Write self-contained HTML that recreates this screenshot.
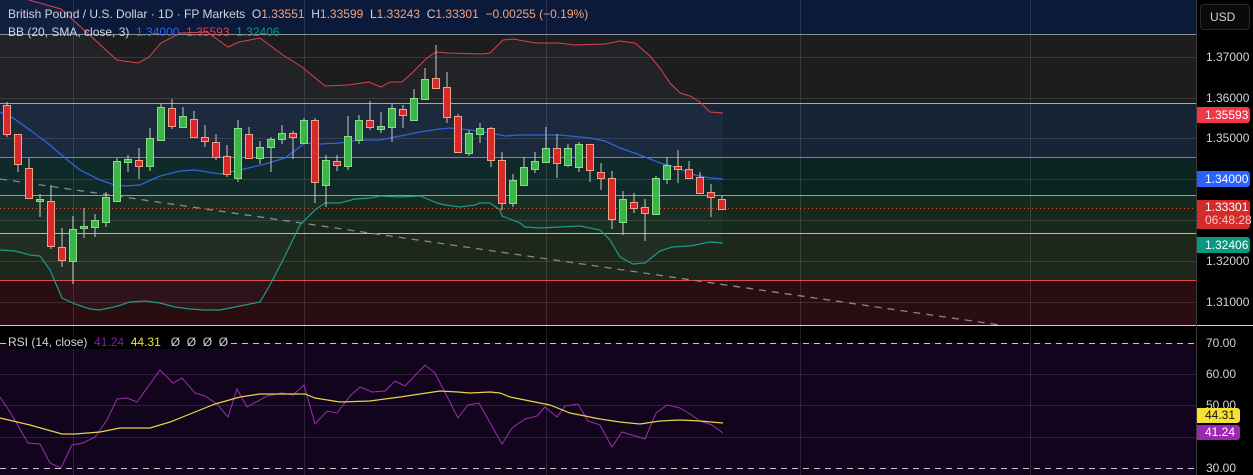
<!DOCTYPE html>
<html><head><meta charset="utf-8"><style>
*{margin:0;padding:0;box-sizing:border-box}
body{width:1253px;height:475px;background:#000;overflow:hidden;position:relative;font-family:"Liberation Sans",sans-serif}
.l{position:absolute;font-size:12px;color:#d1d4dc;white-space:nowrap}
.ax{position:absolute;left:1206px;font-size:12px;color:#d1d4dc;line-height:14px}
.tag{position:absolute;left:1197px;width:53px;padding-left:8px;font-size:12px;color:#fff;line-height:16px;border-radius:0 3px 3px 0}
</style></head><body>
<svg width="1197" height="475" style="position:absolute;left:0;top:0">
<rect x="0" y="0" width="1197" height="34" fill="#0b1a3a"/>
<rect x="0" y="34" width="1197" height="69" fill="#1d1d1f"/>
<rect x="0" y="103" width="1197" height="54" fill="#162435"/>
<rect x="0" y="157" width="1197" height="38" fill="#0a2422"/>
<rect x="0" y="195" width="1197" height="38" fill="#16291c"/>
<rect x="0" y="233" width="1197" height="47" fill="#1d281b"/>
<rect x="0" y="280" width="1197" height="45" fill="#2a0d11"/>
<rect x="0" y="326" width="1197" height="17" fill="#000"/>
<rect x="0" y="343" width="1197" height="132" fill="#12041c"/>
<g stroke="rgba(255,255,255,0.12)" stroke-width="1">
<path d="M0 57.5H1197M0 98.5H1197M0 138.5H1197M0 179.5H1197M0 220.5H1197M0 261.5H1197M0 302.5H1197"/>
<path d="M0 374.5H1197M0 405.5H1197M0 437.5H1197"/>
<path d="M73.5 0V475M304.5 0V475M546.5 0V475M800.5 0V475M1030.5 0V475"/>
</g>
<path d="M0 34.5H1197" stroke="#8a8f98"/>
<path d="M0 103.5H1197" stroke="#7ab6e6"/>
<path d="M0 157.5H1197" stroke="#3aa596"/>
<path d="M0 195.5H1197" stroke="#6dbb70"/>
<path d="M0 233.5H1197" stroke="#a3cf7c"/>
<path d="M0 280.5H1197" stroke="#de4a4e"/>
<path d="M0 208.5H1197" stroke="#d0503a" stroke-dasharray="1 3"/>
<path d="M0 343.5H1197M0 468.5H1197" stroke="#c8c8c8" stroke-dasharray="6 5"/>
<path d="M0 179L1000 325" stroke="#888" stroke-width="1.3" stroke-dasharray="7 6"/>
<polygon fill="rgba(140,160,200,0.05)" points="0,0 29,0 61,9 117,60 138,63 149,57 161,43 180,33 207,32 228,47 239,42 260,38 283,55 302,67 325,86 348,85 369,82 381,87 390,82 402,82 413,72 427,58 436,52 448,53 482,54 490,53 503,40 513,39 536,43 559,43 574,45 605,44 620,41 635,43 650,56 660,68 670,83 680,93 690,96 700,102 710,112 723,113 723,243 710,242 700,244 690,246 672,247 660,251 645,263 633,264 620,257 610,240 600,230 580,226 560,227 540,228 525,227 520,223 502,216 500,210 490,203 480,203 475,205 460,207 445,205 437,203 430,200 420,196 400,197 380,196 370,198 355,199 340,203 325,203 315,210 300,225 283,260 270,285 260,302 240,306 220,310 205,310 190,309 175,307 160,303 145,301 130,302 118,306 100,310 90,309 75,304 62,298 50,270 40,256 30,255 15,251 0,250"/>
<polyline fill="none" stroke="#d9434c" stroke-width="1" points="29,0 61,9 117,60 138,63 149,57 161,43 180,33 207,32 228,47 239,42 260,38 283,55 302,67 325,86 348,85 369,82 381,87 390,82 402,82 413,72 427,58 436,52 448,53 482,54 490,53 503,40 513,39 536,43 559,43 574,45 605,44 620,41 635,43 650,56 660,68 670,83 680,93 690,96 700,102 710,112 723,113"/>
<polyline fill="none" stroke="#2f63e0" stroke-width="1.3" points="0,112 13,118 30,130 50,145 65,158 80,170 100,180 115,185 125,186 140,185 160,176 180,171 195,170 220,174 240,170 265,164 285,158 305,143 320,144 340,143 360,140 380,140 400,136 420,132 440,129 450,128 470,130 490,133 505,136 520,135 560,135 590,138 605,141 620,148 640,155 660,163 675,167 695,175 710,178 723,179"/>
<polyline fill="none" stroke="#1f9a85" stroke-width="1.2" points="0,250 15,251 30,255 40,256 50,270 62,298 75,304 90,309 100,310 118,306 130,302 145,301 160,303 175,307 190,309 205,310 220,310 240,306 260,302 270,285 283,260 300,225 315,210 325,203 340,203 355,199 370,198 380,196 400,197 420,196 430,200 437,203 445,205 460,207 475,205 480,203 490,203 500,210 502,216 520,223 525,227 540,228 560,227 580,226 600,230 610,240 620,257 633,264 645,263 660,251 672,247 690,246 700,244 710,242 723,243"/>
<path fill="none" stroke="#c8c8c8" stroke-width="1" d="M7 102V137M18 134V172M29 158V198M40 194V217M51 185V249M62 228V267M73 216V284M84 208V238M95 214V237M106 192V227M117 158V201M128 155V172M139 148V179M150 128V171M161 103V140M172 99V129M183 107V127M194 111V137M205 125V147M216 134V160M227 145V177M238 120V182M249 127V159M260 141V164M271 137V172M282 125V144M293 131V159M304 118V143M315 118V203M326 155V207M337 155V171M348 116V170M359 115V144M370 101V130M381 112V133M392 103V142M403 105V128M414 89V120M425 68V99M436 45V88M447 72V123M458 114V153M469 130V156M480 123V143M491 127V167M502 152V210M513 174V207M524 157V186M535 152V173M546 127V163M557 134V178M568 144V167M579 142V172M590 144V182M601 163V190M612 171V229M623 191V235M634 193V213M645 199V241M656 176V214M667 157V184M678 150V183M689 161V178M700 172V194M711 184V217M722 196V210"/>
<g fill="#d8282b" stroke="#f3a184" stroke-width="1">
<rect x="3.5" y="105.5" width="7" height="29"/><rect x="14.5" y="134.5" width="7" height="30"/><rect x="25.5" y="168.5" width="7" height="30"/><rect x="47.5" y="201.5" width="7" height="45"/><rect x="58.5" y="247.5" width="7" height="13"/><rect x="135.5" y="160.5" width="7" height="6"/><rect x="168.5" y="108.5" width="7" height="18"/><rect x="190.5" y="119.5" width="7" height="18"/><rect x="201.5" y="137.5" width="7" height="4"/><rect x="212.5" y="142.5" width="7" height="15"/><rect x="223.5" y="156.5" width="7" height="18"/><rect x="245.5" y="134.5" width="7" height="24"/><rect x="289.5" y="133.5" width="7" height="4"/><rect x="311.5" y="120.5" width="7" height="62"/><rect x="333.5" y="161.5" width="7" height="4"/><rect x="366.5" y="120.5" width="7" height="7"/><rect x="399.5" y="109.5" width="7" height="6"/><rect x="432.5" y="78.5" width="7" height="10"/><rect x="443.5" y="87.5" width="7" height="30"/><rect x="454.5" y="116.5" width="7" height="36"/><rect x="487.5" y="128.5" width="7" height="32"/><rect x="498.5" y="160.5" width="7" height="43"/><rect x="553.5" y="148.5" width="7" height="15"/><rect x="586.5" y="144.5" width="7" height="26"/><rect x="597.5" y="172.5" width="7" height="6"/><rect x="608.5" y="178.5" width="7" height="41"/><rect x="630.5" y="202.5" width="7" height="6"/><rect x="641.5" y="207.5" width="7" height="6"/><rect x="674.5" y="166.5" width="7" height="3"/><rect x="685.5" y="169.5" width="7" height="9"/><rect x="696.5" y="177.5" width="7" height="16"/><rect x="707.5" y="192.5" width="7" height="5"/><rect x="718.5" y="199.5" width="7" height="10"/>
</g>
<g fill="#3bb44a" stroke="#86dd86" stroke-width="1">
<rect x="36.5" y="199.5" width="7" height="2"/><rect x="69.5" y="229.5" width="7" height="32"/><rect x="80.5" y="226.5" width="7" height="2"/><rect x="91.5" y="220.5" width="7" height="7"/><rect x="102.5" y="197.5" width="7" height="25"/><rect x="113.5" y="161.5" width="7" height="40"/><rect x="124.5" y="159.5" width="7" height="3"/><rect x="146.5" y="138.5" width="7" height="28"/><rect x="157.5" y="107.5" width="7" height="33"/><rect x="179.5" y="116.5" width="7" height="11"/><rect x="234.5" y="128.5" width="7" height="50"/><rect x="256.5" y="147.5" width="7" height="11"/><rect x="267.5" y="139.5" width="7" height="8"/><rect x="278.5" y="133.5" width="7" height="6"/><rect x="300.5" y="120.5" width="7" height="23"/><rect x="322.5" y="160.5" width="7" height="25"/><rect x="344.5" y="136.5" width="7" height="30"/><rect x="355.5" y="120.5" width="7" height="20"/><rect x="377.5" y="126.5" width="7" height="3"/><rect x="388.5" y="108.5" width="7" height="19"/><rect x="410.5" y="98.5" width="7" height="22"/><rect x="421.5" y="79.5" width="7" height="20"/><rect x="465.5" y="133.5" width="7" height="20"/><rect x="476.5" y="128.5" width="7" height="6"/><rect x="509.5" y="180.5" width="7" height="23"/><rect x="520.5" y="167.5" width="7" height="18"/><rect x="531.5" y="161.5" width="7" height="8"/><rect x="542.5" y="148.5" width="7" height="14"/><rect x="564.5" y="148.5" width="7" height="17"/><rect x="575.5" y="144.5" width="7" height="23"/><rect x="619.5" y="199.5" width="7" height="23"/><rect x="652.5" y="178.5" width="7" height="36"/><rect x="663.5" y="165.5" width="7" height="14"/>
</g>
<polyline fill="none" stroke="#9c2fb0" stroke-width="1" points="0,397 10,412 28,443 40,444 50,463 61,468 72,445 83,443 95,437 107,420 117,399 127,398 137,402 160,370 173,383 182,378 195,393 205,396 217,404 228,417 237,389 247,407 258,401 267,396 282,393 293,395 304,385 315,424 327,411 337,413 350,396 360,387 372,392 385,391 395,381 405,386 425,365 435,373 458,418 468,405 479,403 502,444 512,428 525,419 537,416 545,407 557,417 565,406 578,404 588,421 600,425 612,447 622,432 645,439 656,413 667,405 680,408 690,414 700,421 712,425 723,433"/>
<polyline fill="none" stroke="#e8d44a" stroke-width="1.2" points="0,418 30,425 62,434 75,434 100,432 120,428 150,428 170,422 200,410 215,404 240,397 260,394 305,394 315,398 340,402 370,401 400,397 440,391 458,392 470,393 490,392 500,393 510,397 530,401 550,405 570,413 600,419 620,422 640,424 660,421 680,420 700,421 723,423"/>
</svg>
<div style="position:absolute;left:0;top:325px;width:1253px;height:1px;background:#d0d0d0"></div>
<div style="position:absolute;left:1196px;top:0;width:1px;height:475px;background:#3a3a3a"></div>
<div class="l" style="left:8px;top:7px">British Pound / U.S. Dollar · 1D · FP Markets&nbsp; O<span style="color:#f5a27a">1.33551</span>&nbsp; H<span style="color:#f5a27a">1.33599</span>&nbsp; L<span style="color:#f5a27a">1.33243</span>&nbsp; C<span style="color:#f5a27a">1.33301</span>&nbsp; <span style="color:#f5a27a">−0.00255 (−0.19%)</span></div>
<div class="l" style="left:8px;top:25px">BB (20, SMA, close, 3)&nbsp; <span style="color:#2962ff">1.34000</span>&nbsp; <span style="color:#f23645">1.35593</span>&nbsp; <span style="color:#089981">1.32406</span></div>
<div class="l" style="left:8px;top:335px;background:#000">RSI (14, close)&nbsp; <span style="color:#7b1fa2">41.24</span>&nbsp; <span style="color:#f5e033">44.31</span>&nbsp;&nbsp; Ø&nbsp; Ø&nbsp; Ø&nbsp; Ø</div>
<div style="position:absolute;left:1200px;top:4px;width:50px;height:26px;border:1px solid #2a2a2a;border-radius:4px;background:#0a0a0a;color:#d1d4dc;font-size:12px;line-height:24px;padding-left:9px">USD</div>
<div class="ax" style="top:50px">1.37000</div>
<div class="ax" style="top:91px">1.36000</div>
<div class="ax" style="top:131px">1.35000</div>
<div class="ax" style="top:254px">1.32000</div>
<div class="ax" style="top:295px">1.31000</div>
<div class="ax" style="top:336px">70.00</div>
<div class="ax" style="top:367px">60.00</div>
<div class="ax" style="top:398px">50.00</div>
<div class="ax" style="top:461px">30.00</div>
<div class="tag" style="top:107px;background:#f23645">1.35593</div>
<div class="tag" style="top:171px;background:#2962ff">1.34000</div>
<div class="tag" style="top:200px;height:29px;background:#d32a2a;line-height:13px;padding-top:1px">1.33301<br><span style="color:#f7c9c9">06:48:28</span></div>
<div class="tag" style="top:237px;background:#089981">1.32406</div>
<div class="tag" style="top:408px;width:43px;background:#f5e033;color:#111;line-height:15px">44.31</div>
<div class="tag" style="top:425px;width:43px;background:#9c27b0;line-height:15px">41.24</div>
</body></html>
